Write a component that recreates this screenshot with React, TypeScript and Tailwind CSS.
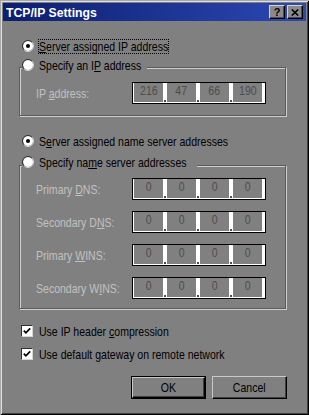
import React, { Fragment } from "react";

function Txt({ children, className = "" }: { children: React.ReactNode; className?: string }) {
  return (
    <span className={`inline-block whitespace-nowrap origin-left scale-x-[0.81] ${className}`}>{children}</span>
  );
}

function U({ children }: { children: React.ReactNode }) {
  return <span className="underline decoration-1">{children}</span>;
}

function Radio({ checked }: { checked?: boolean }) {
  return (
    <svg width="12" height="12" viewBox="0 0 12 12" className="block shrink-0">
      <circle cx="6" cy="6" r="5" fill="#ffffff" />
      <path d="M2.11 9.89 A5.5 5.5 0 0 1 9.89 2.11" fill="none" stroke="#303030" strokeWidth="1" />
      <path d="M9.89 2.11 A5.5 5.5 0 0 1 2.11 9.89" fill="none" stroke="#d6d6d6" strokeWidth="1" />
      {checked && <circle cx="6" cy="6" r="2" fill="#000000" />}
    </svg>
  );
}

function Check() {
  return (
    <div className="w-[12px] h-[12px] shrink-0 bg-white border border-t-[#303030] border-l-[#303030] border-r-[#d6d6d6] border-b-[#d6d6d6] flex items-center justify-center">
      <svg width="8" height="8" viewBox="0 0 8 8" className="block">
        <path d="M0.8 3.6 L2.9 5.8 L7.2 1.3" fill="none" stroke="#000000" strokeWidth="1.7" />
      </svg>
    </div>
  );
}

function IpField({ values }: { values: string[] }) {
  return (
    <div className="flex shrink-0 w-[134px] h-[22px] border border-black bg-white pl-[1px] pr-[3px] pb-[1px]">
      {values.map((v, i) => (
        <Fragment key={i}>
          {i > 0 && (
            <div className="w-[4px] shrink-0 flex items-end pl-[1px]">
              <div className="w-[2px] h-[2px] bg-[#4d4d4d]" />
            </div>
          )}
          <div className="w-[29px] shrink-0 bg-[#808080] flex justify-center text-[#4d4d4d]">
            <span className="inline-block whitespace-nowrap origin-center scale-x-[0.81]">{v}</span>
          </div>
        </Fragment>
      ))}
    </div>
  );
}

function FieldRow({ label, values }: { label: React.ReactNode; values: string[] }) {
  return (
    <div className="flex items-center h-[22px]">
      <div className="w-[96px] shrink-0">
        <Txt className="text-[#c0c0c0]">{label}</Txt>
      </div>
      <IpField values={values} />
    </div>
  );
}

function TitleBtn({ children }: { children: React.ReactNode }) {
  return (
    <div className="w-[16px] h-[14px] bg-[#8a8a8a] border border-t-[#d4d4d4] border-l-[#d4d4d4] border-r-black border-b-black shadow-[inset_-1px_-1px_0_#4a4a4a] flex items-center justify-center">
      {children}
    </div>
  );
}

export default function App() {
  const zeros = ["0", "0", "0", "0"];
  return (
    <div className="w-[309px] h-[415px] bg-[#808080] p-[3px] flex flex-col text-black text-[13px] leading-[15px] [font-family:'Liberation_Sans',Arial,sans-serif] shadow-[inset_1px_1px_0_#a8a8a8,inset_-1px_-1px_0_#000000,inset_2px_2px_0_#e0e0e0,inset_-2px_-2px_0_#404040]">
      {/* Title bar */}
      <div className="h-[18px] shrink-0 flex items-center bg-linear-to-r from-[#0c1e70] to-[#2c48b4] pl-[3px] pr-[3px]">
        <span className="inline-block whitespace-nowrap origin-left scale-x-[0.94] text-white font-bold text-[13px] leading-[15px]">
          TCP/IP Settings
        </span>
        <div className="ml-auto flex gap-[2px]">
          <TitleBtn>
            <span className="font-bold text-[11px] leading-[11px] text-black">?</span>
          </TitleBtn>
          <TitleBtn>
            <svg width="8" height="7" viewBox="0 0 8 7" className="block">
              <path d="M0.8 0.5 L7.2 6.5 M7.2 0.5 L0.8 6.5" stroke="#000000" strokeWidth="1.6" fill="none" />
            </svg>
          </TitleBtn>
        </div>
      </div>

      {/* Body */}
      <div className="flex flex-col pl-[16px]">
        <div className="mt-[18px] h-[15px] flex items-start pl-[3px]">
          <div className="mt-[1px]">
            <Radio checked />
          </div>
          <div className="ml-[4px] w-[131px] h-[15px] border border-dotted border-black leading-[13px]">
            <Txt>
              <U>S</U>erver assigned IP address
            </Txt>
          </div>
        </div>

        <div className="relative mt-[13px] w-[267px] border border-[#5c5c5c] shadow-[inset_1px_1px_0_#cfcfcf,1px_1px_0_#cfcfcf] pl-[16px] pt-[14px] pb-[11px]">
          <div className="absolute left-[2px] top-[-11px] h-[16px] flex items-center bg-[#808080] pr-[2px]">
            <Radio />
            <div className="ml-[5px] w-[106px]">
              <Txt>
                Specify an I<U>P</U> address
              </Txt>
            </div>
          </div>
          <FieldRow
            label={
              <>
                IP <U>a</U>ddress:
              </>
            }
            values={["216", "47", "66", "190"]}
          />
        </div>

        <div className="mt-[17px] h-[16px] flex items-center pl-[3px]">
          <Radio checked />
          <div className="ml-[5px]">
            <Txt>
              S<U>e</U>rver assigned name server addresses
            </Txt>
          </div>
        </div>

        <div className="relative mt-[16px] w-[267px] border border-[#5c5c5c] shadow-[inset_1px_1px_0_#cfcfcf,1px_1px_0_#cfcfcf] pl-[16px] pt-[12px] pb-[9px] flex flex-col gap-[11px]">
          <div className="absolute left-[2px] top-[-12px] h-[16px] flex items-center bg-[#808080] pr-[2px]">
            <Radio />
            <div className="ml-[5px] w-[156px]">
              <Txt>
                Specify na<U>m</U>e server addresses
              </Txt>
            </div>
          </div>
          <FieldRow
            label={
              <>
                Primary <U>D</U>NS:
              </>
            }
            values={zeros}
          />
          <FieldRow
            label={
              <>
                Secondary D<U>N</U>S:
              </>
            }
            values={zeros}
          />
          <FieldRow
            label={
              <>
                Primary <U>W</U>INS:
              </>
            }
            values={zeros}
          />
          <FieldRow
            label={
              <>
                Secondary W<U>I</U>NS:
              </>
            }
            values={zeros}
          />
        </div>

        <div className="mt-[14px] h-[16px] flex items-center pl-[2px]">
          <Check />
          <div className="ml-[6px]">
            <Txt>
              Use IP header <U>c</U>ompression
            </Txt>
          </div>
        </div>
        <div className="mt-[7px] h-[16px] flex items-center pl-[2px]">
          <Check />
          <div className="ml-[6px]">
            <Txt>
              Use default <U>g</U>ateway on remote network
            </Txt>
          </div>
        </div>

        <div className="mt-[14px] w-[268px] flex justify-end gap-[6px]">
          <button type="button" className="w-[75px] h-[23px] border border-black">
            <div className="w-full h-full border border-t-[#c8c8c8] border-l-[#c8c8c8] border-r-black border-b-black shadow-[inset_-1px_-1px_0_#404040] flex items-center justify-center">
              <span className="inline-block whitespace-nowrap origin-center scale-x-[0.81]">OK</span>
            </div>
          </button>
          <button
            type="button"
            className="w-[75px] h-[23px] border border-t-[#c8c8c8] border-l-[#c8c8c8] border-r-black border-b-black shadow-[inset_-1px_-1px_0_#404040] flex items-center justify-center"
          >
            <span className="inline-block whitespace-nowrap origin-center scale-x-[0.81]">Cancel</span>
          </button>
        </div>
      </div>
    </div>
  );
}
